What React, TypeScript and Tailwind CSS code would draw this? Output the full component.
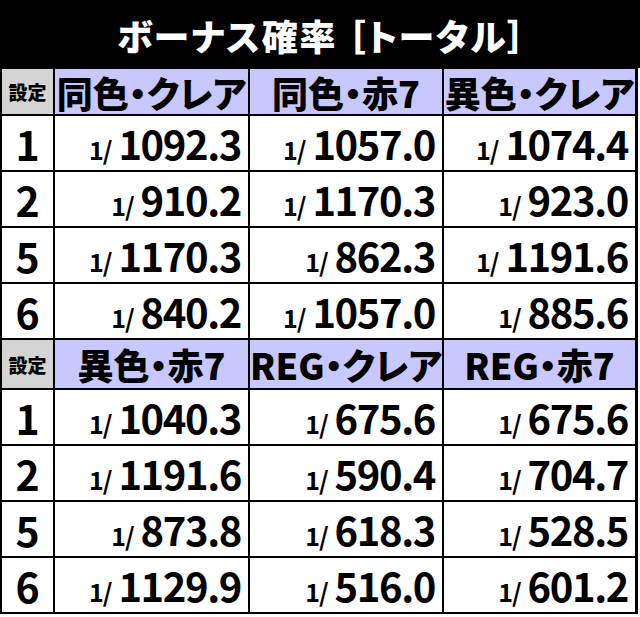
const blocks = [
  {
    heads: ["同色・クレア", "同色・赤7", "異色・クレア"],
    rows: [
      ["1", "1092.3", "1057.0", "1074.4"],
      ["2", "910.2", "1170.3", "923.0"],
      ["5", "1170.3", "862.3", "1191.6"],
      ["6", "840.2", "1057.0", "885.6"],
    ],
  },
  {
    heads: ["異色・赤7", "REG・クレア", "REG・赤7"],
    rows: [
      ["1", "1040.3", "675.6", "675.6"],
      ["2", "1191.6", "590.4", "704.7"],
      ["5", "873.8", "618.3", "528.5"],
      ["6", "1129.9", "516.0", "601.2"],
    ],
  },
];

const Prob = ({ value }: { value: string }) => (
  <div className="bg-white flex items-center justify-end pr-[7px]">
    <div className="flex items-baseline">
      <span className="text-[25px] font-bold leading-none mr-[7px] tracking-[-0.04em]">1/</span>
      <span className="text-[40px] font-bold leading-none tracking-[-0.035em]">{value}</span>
    </div>
  </div>
);

export default function App() {
  return (
    <div className="w-[640px] h-[617px] bg-white text-black font-['Noto_Sans_CJK_JP',sans-serif] [font-feature-settings:'palt']">
      <div className="h-[68px] bg-black flex items-center justify-center">
        <h1 className="text-white text-[36px] font-black leading-none tracking-[0.05em] pt-[2px] pl-[4px]">
          ボーナス確率 ［トータル］
        </h1>
      </div>
      <div className="w-[638px] bg-black pt-[1px] pb-[2px] pl-[2px] pr-[3px] grid grid-cols-[51px_193px_192px_191px] grid-rows-[45px_repeat(4,54px)_48px_repeat(4,54px)] gap-[2px]">
        {blocks.map((b, bi) => [
          <div key={`s${bi}`} className="bg-[#d4d4d4] flex items-center justify-center text-[19px] font-black leading-none">
            設定
          </div>,
          ...b.heads.map((h) => (
            <div key={`h${bi}${h}`} className="bg-[#c8c8fe] flex items-center justify-center text-[36px] font-black leading-none">
              {h}
            </div>
          )),
          ...b.rows.flatMap((r) => [
            <div key={`l${bi}${r[0]}`} className="bg-white flex items-center justify-center text-[41px] font-bold leading-none">
              {r[0]}
            </div>,
            ...r.slice(1).map((v, i) => <Prob key={`v${bi}${r[0]}${i}`} value={v} />),
          ]),
        ])}
      </div>
    </div>
  );
}
